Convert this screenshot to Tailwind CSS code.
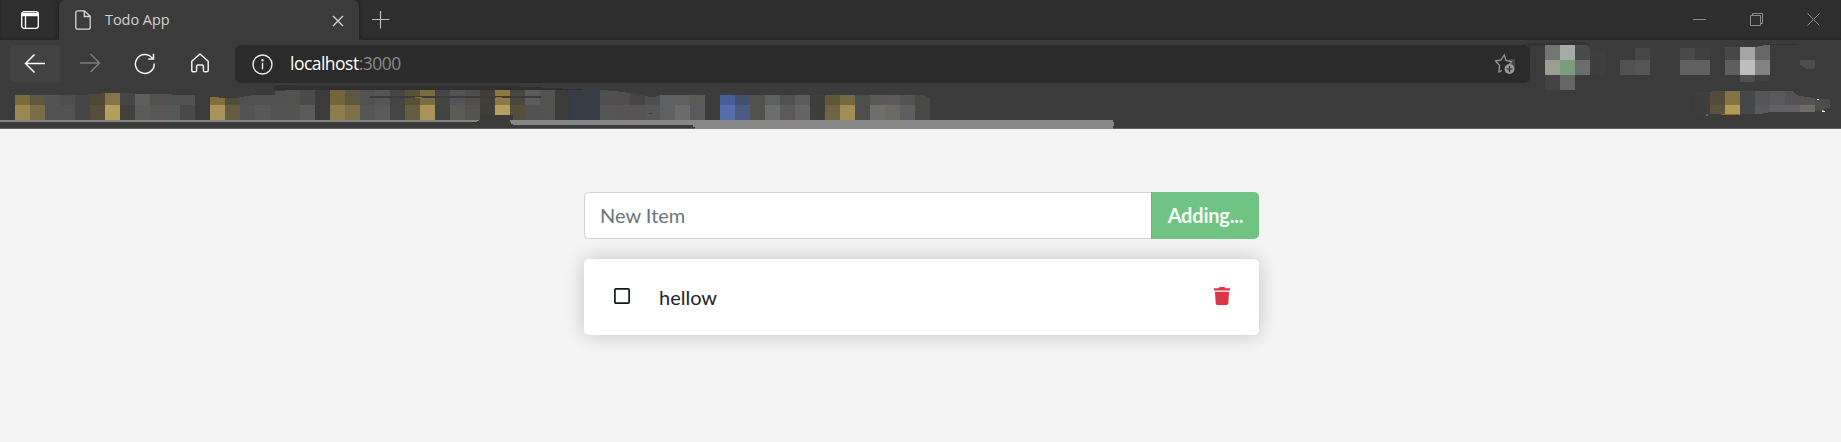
<!DOCTYPE html>
<html lang="en">
<head>
<meta charset="utf-8">
<title>Todo App</title>
<script src="https://cdn.jsdelivr.net/npm/@tailwindcss/browser@4"></script>
</head>
<body class="w-[1841px] h-[442px] overflow-hidden bg-[#f4f4f4] flex flex-col">
<header class="h-[129px] shrink-0 bg-[#3b3b3b] font-['Open_Sans',sans-serif]">
  <!-- Tab strip -->
  <div class="h-10 flex bg-[#2e2e2e]">
    <div class="w-[59px] h-10 flex items-center justify-center shadow-[inset_0_-2px_2px_#252525] rounded-br-md">
      <svg class="ml-[1px]" width="20" height="20" viewBox="0 0 20 20" fill="none" stroke="#fff" stroke-width="1.3"><rect x="1.7" y="1.7" width="16.6" height="16.6" rx="2.5"/><path d="M2 3.5h16v2.2H2z" fill="#fff"/><path d="M5.5 6v12"/></svg>
    </div>
    <div class="w-[300px] h-10 flex items-center bg-[#3b3b3b] rounded-t-md pl-4 pr-[14px] shadow-[0_0_4px_#1e1e1e] [clip-path:inset(0_-6px_0_-6px)]">
      <svg width="16" height="20" viewBox="0 0 16 20" fill="none" stroke="#d6d6d6" stroke-width="1.3"><path d="M2.5.8h7l5.7 5.5v11c0 1.2-.7 1.9-1.9 1.9H2.7C1.500 19.200.8 18.500.8 17.300V2.700C.8 1.500 1.500.8 2.500.8zM9.300 1v5.500h5.700"/></svg>
      <span class="ml-[14px] text-[14.500px] leading-5 text-[#d2d2d2] tracking-[-0.050px]">Todo App</span>
      <svg class="ml-auto mt-[1px]" width="14" height="14" viewBox="0 0 14 14" stroke="#d6d6d6" stroke-width="1.3"><path d="M2 2l10 10M12 2L2 12"/></svg>
    </div>
    <div class="flex-1 h-10 flex items-center pl-[13px] pr-[20px] shadow-[inset_0_-2px_2px_#252525] rounded-bl-md">
      <svg width="18" height="18" viewBox="0 0 18 18" stroke="#bdbdbd" stroke-width="1.2"><path d="M0 8.500h17.500M8.500 0v17.500"/></svg>
      <svg class="ml-auto -mt-[1px]" width="130" height="16" viewBox="0 0 130 16" fill="none" stroke="#8c8c8c"><path d="M2 7.500h13M59.500 3.500h10v10h-10zM61.500 3.500v-2h10v10h-2M116.500 1.500l12 12M128.500 1.500l-12 12"/></svg>
    </div>
  </div>
  <!-- Navigation row -->
  <div class="h-[43px] pt-[5px] pl-[10px] flex">
    <div class="w-[50px] h-[37px] bg-[#424242] rounded-sm flex items-center justify-center">
      <svg width="22" height="20" viewBox="0 0 22 20" fill="none" stroke="#fff" stroke-width="1.5"><path d="M21 9.500H1.500M10.500.500L1.500 9.500l9 9"/></svg>
    </div>
    <svg class="ml-[19px] mt-2" width="22" height="20" viewBox="0 0 22 20" fill="none" stroke="#7c7c7c" stroke-width="1.5"><path d="M1 10h19.500M11.500 1l9 9-9 9"/></svg>
    <svg class="ml-[33px] mt-2" width="22" height="22" viewBox="0 0 22 22" fill="none" stroke="#f2f2f2" stroke-width="1.500"><path d="M20.200 10.500A9.400 9.400 0 1 1 18.200 5.200M19.500.800v5.200h-5.200"/></svg>
    <svg class="ml-[34px] mt-2" width="20" height="20" viewBox="0 0 20 20" fill="none" stroke="#f2f2f2" stroke-width="1.500"><path d="M1.800 8.300L10 1l8.200 7.300v8.900c0 1-.6 1.600-1.600 1.600h-1.600c-1 0-1.600-.6-1.600-1.600v-3.600c0-1-.6-1.600-1.600-1.600H8.200c-1 0-1.600.6-1.600 1.600v3.600c0 1-.6 1.600-1.600 1.600H3.400c-1 0-1.600-.6-1.600-1.600z"/></svg>
    <div class="ml-[25px] w-[1295px] h-[38px] rounded-md bg-[#2b2b2b] flex items-center pl-[17px] pr-[14px]">
      <svg width="21" height="21" viewBox="0 0 21 21" fill="none" stroke="#ededed" stroke-width="1.400"><circle cx="10.500" cy="10.500" r="9.500"/><path d="M10.500 8.800v6.500"/><circle cx="10.500" cy="6.200" r=".5"/></svg>
      <span class="ml-[17px] -mt-[2px] text-[17.500px] leading-6 tracking-[-0.520px] text-white">localhost<span class="text-[#8a8a8a]">:3000</span></span>
      <svg class="ml-auto" width="22" height="22" viewBox="0 0 22 22"><path d="M15 6h6v8h-6z" fill="#484848"/><path d="M8 17.500l-3 1.500 .6-6.500-4-4.500 5.400-1L10.300 2l1.800 5.500 5.400 1.200-2.500 3" fill="#2b2b2b" stroke="#989898" stroke-width="1.300"/><circle cx="15.500" cy="16" r="5" fill="#999"/><path d="M15.500 13v6M12.500 16h6" stroke="#2b2b2b" stroke-width="1.200"/></svg>
    </div>
    <!-- Pixelated extension buttons -->
    <svg class="-mt-[5px] shrink-0 overflow-visible" width="311" height="50" viewBox="1530 40 311 50" shape-rendering="crispEdges">
      <path d="M1521 44l15-1h34l7-1h8l5 4h-60z" fill="#333"/>
      <path d="M1545 45h15v15h-15z" fill="#747474"/><path d="M1560 45h15v15h-15z" fill="#a6ada8"/><path d="M1575 45h11l4 4v11h-15z" fill="#4b4b4b"/>
      <path d="M1545 60h15v15h-15z" fill="#9d9d90"/><path d="M1560 60h15v15h-15z" fill="#7b9d7c"/><path d="M1575 60h15v15h-15z" fill="#6c6c6c"/>
      <path d="M1590 51h15v24h-15z" fill="#3e3e3e"/><path d="M1545 75h15v15h-15z" fill="#444"/><path d="M1560 75h15v15h-15z" fill="#666"/>
      <path d="M1635 48h15v12h-15z" fill="#474747"/><path d="M1620 60h15v15h-15z" fill="#515151"/><path d="M1635 60h15v15h-15z" fill="#555"/>
      <path d="M1680 48h15v12h-15z" fill="#494949"/><path d="M1695 48h15v12h-15z" fill="#3f3f3f"/><path d="M1680 60h30v15h-30z" fill="#606060"/>
      <path d="M1725 47h15v13h-15z" fill="#474747"/><path d="M1740 47h15v13h-15z" fill="#a5a5a5"/><path d="M1755 47l10-2h5v15h-15z" fill="#676767"/>
      <path d="M1725 60h15v15h-15z" fill="#5e5e5e"/><path d="M1740 60h15v15h-15z" fill="#bebebe"/><path d="M1755 60h15v15h-15z" fill="#838383"/>
      <path d="M1740 75h15v7h-15z" fill="#505050"/><path d="M1755 75h15v6h-15z" fill="#404040"/>
      <path d="M1767 44h31v1h-31z" fill="#333"/><path d="M1800 60h15v9h-8l-7-4z" fill="#4d4d4d"/>
    </svg>
  </div>
  <!-- Pixelated bookmarks bar -->
  <svg class="block" width="1841" height="46" viewBox="0 83 1841 46" shape-rendering="crispEdges">
    <g>
      <path d="M15 95h15v10H15z" fill="#7a6b3e"/><path d="M30 95h15v10H30z" fill="#5d5840"/><path d="M45 95h15v10H45z" fill="#525355"/><path d="M60 95h15v10H60z" fill="#4d4d4d"/><path d="M75 95h10l5-1v11H75z" fill="#454545"/><path d="M90 94h9l6-1v12H90z" fill="#4f4835"/><path d="M105 93h15v12h-15z" fill="#837546"/><path d="M120 93h9l6 1v11h-15z" fill="#454545"/><path d="M135 94h15v11h-15z" fill="#5c5f5e"/><path d="M150 94h15v11h-15z" fill="#53514e"/><path d="M165 94h7v1h23v10h-30z" fill="#505153"/>
      <path d="M15 105h15v15H15z" fill="#9b8650"/><path d="M30 105h15v15H30z" fill="#7a6d48"/><path d="M45 105h30v15H45z" fill="#525252"/><path d="M75 105h15v15H75z" fill="#454545"/><path d="M90 105h15v15H90z" fill="#574f3a"/><path d="M105 105h15v15h-15z" fill="#b39f5e"/><path d="M120 105h15v15h-15z" fill="#41403b"/><path d="M135 105h15v15h-15z" fill="#5a5c5b"/><path d="M150 105h15v15h-15z" fill="#5a5656"/><path d="M165 105h15v15h-15z" fill="#53595a"/><path d="M180 105h15v15h-15z" fill="#4b4848"/>
    </g>
    <g>
      <path d="M210 97h9v1h6v7h-15z" fill="#806e3d"/><path d="M225 98h13l2-1v8h-15z" fill="#524d3b"/><path d="M240 97l14-2h21v-4h10v14h-45z" fill="#515151"/><path d="M285 90h15v15h-15z" fill="#545250"/><path d="M300 90h15v15h-15z" fill="#4b4b4b"/>
      <path d="M210 105h15v15h-15z" fill="#a8945a"/><path d="M225 105h15v15h-15z" fill="#665c40"/><path d="M240 105h15v15h-15z" fill="#535353"/><path d="M255 105h15v15h-15z" fill="#56585a"/><path d="M270 105h30v15h-30z" fill="#535352"/><path d="M300 105h15v15h-15z" fill="#5b5b59"/>
    </g>
    <g>
      <path d="M330 90h15v15h-15z" fill="#72663a"/><path d="M345 90h15v15h-15z" fill="#5e583f"/><path d="M360 90h15v15h-15z" fill="#505254"/><path d="M375 90h15v15h-15z" fill="#565656"/><path d="M390 90h15v15h-15z" fill="#454543"/><path d="M405 90h15v15h-15z" fill="#5a5037"/><path d="M420 90h15v15h-15z" fill="#7c6d41"/><path d="M435 90h15v15h-15z" fill="#454545"/><path d="M450 90h15v15h-15z" fill="#535456"/><path d="M465 90h15v15h-15z" fill="#4f4e4b"/>
      <path d="M330 105h15v15h-15z" fill="#8e7c4e"/><path d="M345 105h15v15h-15z" fill="#7e7149"/><path d="M360 105h15v15h-15z" fill="#545656"/><path d="M375 105h15v15h-15z" fill="#5a5a5a"/><path d="M390 105h15v15h-15z" fill="#454543"/><path d="M405 105h15v15h-15z" fill="#665c40"/><path d="M420 105h15v15h-15z" fill="#a89458"/><path d="M435 105h15v15h-15z" fill="#424444"/><path d="M450 105h15v15h-15z" fill="#5a5b54"/><path d="M465 105h15v15h-15z" fill="#53524f"/>
      <path d="M480 90h15v30h-15z" fill="#403e36"/><path d="M495 90h15v15h-15z" fill="#8b7a43"/><path d="M510 90h15v15h-15z" fill="#4a483d"/><path d="M525 90h15v15h-15z" fill="#5d5a5b"/><path d="M540 90h15v15h-15z" fill="#52524f"/>
      <path d="M495 105h15v10h-15z" fill="#b5a05d"/><path d="M510 105h15v15h-15z" fill="#564e3a"/><path d="M525 105h15v15h-15z" fill="#515153"/><path d="M540 105h15v15h-15z" fill="#525252"/><path d="M570 90h30v30h-30z" fill="#363d47"/>
    </g>
    <g>
      <path d="M600 90l15 1v14h-15z" fill="#505052"/><path d="M615 91l15 2v12h-15z" fill="#514e4d"/><path d="M630 93l15 3v9h-15z" fill="#454545"/><path d="M645 96l5 1h5l5-2v10h-15z" fill="#4e4f51"/><path d="M660 95h30v25h-30z" fill="#5e6061"/><path d="M690 95h15v10h-15z" fill="#5c5a56"/>
      <path d="M600 105h15v15h-15z" fill="#545655"/><path d="M615 105h30v15h-30z" fill="#565352"/><path d="M645 105h15v15h-15z" fill="#565658"/><path d="M675 105h15v15h-15z" fill="#6b6b6b"/><path d="M690 105h15v15h-15z" fill="#5a5a5c"/>
      <path d="M720 95h15v10h-15z" fill="#475e96"/><path d="M735 95h15v10h-15z" fill="#42516f"/><path d="M750 95h15v25h-15z" fill="#51514d"/><path d="M765 95h15v10h-15z" fill="#5e605f"/><path d="M780 95h15v10h-15z" fill="#515052"/><path d="M795 95h15v10h-15z" fill="#5b5c5f"/>
      <path d="M720 105h15v15h-15z" fill="#556eab"/><path d="M735 105h15v15h-15z" fill="#4b5b85"/><path d="M765 105h15v15h-15z" fill="#6a6e6d"/><path d="M780 105h15v15h-15z" fill="#5d595a"/><path d="M795 105h15v15h-15z" fill="#656567"/>
      <path d="M810 95h15v25h-15z" fill="#3e3e3d"/><path d="M825 95h15v10h-15z" fill="#5e5637"/><path d="M840 95h15v10h-15z" fill="#746843"/><path d="M855 95h15v25h-15z" fill="#4b4e4d"/><path d="M870 95h15v10h-15z" fill="#5d5858"/><path d="M885 95h15v10h-15z" fill="#5a5a5d"/><path d="M900 95h15v10h-15z" fill="#535350"/><path d="M915 95h6l9 3v22h-15z" fill="#484846"/>
      <path d="M825 105h15v15h-15z" fill="#6e6346"/><path d="M840 105h15v15h-15z" fill="#a18e56"/><path d="M870 105h15v15h-15z" fill="#6c6f6b"/><path d="M885 105h15v15h-15z" fill="#6c6963"/><path d="M900 105h15v15h-15z" fill="#5e5e60"/>
    </g>
    <path d="M274 90v-4l3-1h18v1h226v1h21v1h20v1h20v1z" fill="#303030"/>
    <path d="M370 96h171v2H370z" fill="#3c3c3c"/><path d="M415 97h7v1h-7zM496 97h6v1h-6z" fill="#8a7020"/><path d="M649 113h3v1h-3z" fill="#3b3b3b"/>
    <path d="M480 115h33v5h-33z" fill="#3b3b3b"/>
    <path d="M0 120h479v1h-2v1H0z" fill="#868686"/>
    <path d="M0 128h1841v1H0z" fill="#636161"/>
    <path d="M510 120h603v2h1v4h-1v3H695v-2h-2v-2H513v-1h-2z" fill="#878787"/>
    <g>
      <path d="M1695 92h15v22h-15z" fill="#3e3e3e"/><path d="M1710 92l3-1h12v14h-15z" fill="#544c38"/><path d="M1725 91h15v14h-15z" fill="#837447"/><path d="M1740 91h15v23h-15z" fill="#464749"/><path d="M1755 91h15v14h-15z" fill="#555557"/><path d="M1770 91h15v14h-15z" fill="#5a5a5c"/><path d="M1785 91h8l3 4 4 1v9h-15z" fill="#555255"/><path d="M1800 96l15 2v7h-15z" fill="#535353"/>
      <path d="M1710 105h15v9h-15z" fill="#5b543d"/><path d="M1725 105h15v10h-15z" fill="#b09b59"/><path d="M1721 114h18v1h-18z" fill="#98710c"/><path d="M1755 105h15v7l-10 2h-5z" fill="#5c595c"/><path d="M1770 105h15v7h-15z" fill="#616168"/><path d="M1785 105h15v7h-15z" fill="#656066"/><path d="M1800 105h15v7h-15z" fill="#6b6b68"/><path d="M1815 99h15v9l-7 1v2h-8z" fill="#4c4c4a"/><path d="M1817 99h2v1h-2zM1822 111h3v1h-3z" fill="#fff"/><path d="M1822 110h2v1h-2z" fill="#c89a20"/><path d="M1706 114h2v2h-2z" fill="#666"/>
    </g>
  </svg>
</header>
<main class="w-[675px] ml-[584px] pt-[63px] font-['Lato',sans-serif] text-[20px] leading-[30px] text-[#212529]">
  <form class="h-[47px] flex">
    <input class="flex-1 min-w-0 h-full bg-white border border-r-0 border-[#ced4da] rounded-l-[5px] pl-[15px] pb-[2px] placeholder:text-[#6c757d] outline-none" placeholder="New Item">
    <button type="button" class="w-[108px] h-full pb-[2px] bg-[#71c383] border-l border-[#62b877] rounded-r-[5px] text-[#f4fbf5] font-bold tracking-[-0.2px]">Adding...</button>
  </form>
  <div class="mt-5 h-[76px] bg-white rounded-[5px] shadow-[0_0_20px_rgba(0,0,0,0.2)] flex items-center pl-[30px] pr-[29px]">
    <svg class="-mt-[2px]" width="16" height="16" viewBox="0 0 16 16" fill="none" stroke="#10191e" stroke-width="1.700"><rect x=".9" y=".9" width="14.200" height="14.200" rx="1"/></svg>
    <span class="ml-[29px] -mt-[1px]">hellow</span>
    <svg class="ml-auto -mt-[3px]" width="16" height="18" viewBox="0 0 16 18" fill="#dc3545"><path d="M0 1.200h4.800L5.500 0h5l.7 1.200H16v2.200H0zM1 4.800h14l-.7 11.500c-.1 1.100-.7 1.700-1.700 1.700H3.400c-1 0-1.600-.6-1.700-1.700z"/></svg>
  </div>
</main>
</body>
</html>
